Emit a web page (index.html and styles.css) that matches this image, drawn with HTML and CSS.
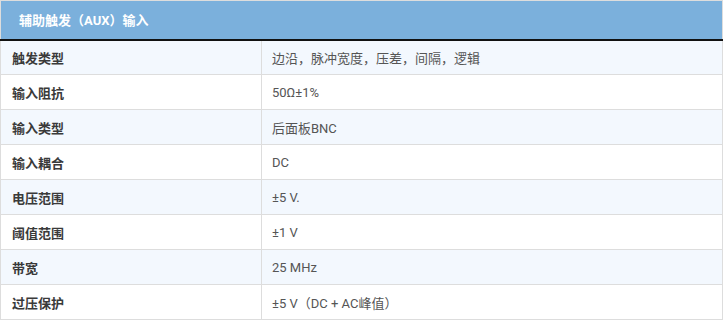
FILE: index.html
```html
<!DOCTYPE html>
<html lang="zh">
<head>
<meta charset="utf-8">
<link rel="stylesheet" href="styles.css">
</head>
<body>
<table class="spec">
  <colgroup><col class="c-label"><col class="c-val"></colgroup>
  <thead>
    <tr><th colspan="2" class="head">辅助触发（AUX）输入</th></tr>
  </thead>
  <tbody>
    <tr class="alt"><td class="label">触发类型</td><td class="val">边沿，脉冲宽度，压差，间隔，逻辑</td></tr>
    <tr><td class="label">输入阻抗</td><td class="val">50Ω±1%</td></tr>
    <tr class="alt"><td class="label">输入类型</td><td class="val">后面板BNC</td></tr>
    <tr><td class="label">输入耦合</td><td class="val">DC</td></tr>
    <tr class="alt"><td class="label">电压范围</td><td class="val">±5 V.</td></tr>
    <tr><td class="label">阈值范围</td><td class="val">±1 V</td></tr>
    <tr class="alt"><td class="label">带宽</td><td class="val">25 MHz</td></tr>
    <tr><td class="label">过压保护</td><td class="val">±5 V（DC + AC峰值）</td></tr>
  </tbody>
</table>
</body>
</html>
```
FILE: styles.css
```css
html, body {
  margin: 0;
  padding: 0;
  background: #fff;
}
.spec {
  width: 723px;
  border-collapse: collapse;
  font-family: Roboto, "Noto Sans CJK SC", sans-serif;
  font-size: 13px;
  table-layout: fixed;
}
.c-label { width: 261px; }
.head {
  background: #7bb0dc;
  color: #fff;
  font-weight: bold;
  text-align: left;
  height: 39px;
  padding: 0 0 0 18px;
  border: 1px solid #ddd;
  border-bottom: 2px solid #111;
  box-sizing: border-box;
}
.spec td {
  height: 35px;
  padding: 0 10px;
  border: 1px solid #ddd;
  box-sizing: border-box;
}
.spec .label {
  padding-left: 11px;
  color: #3a3a3a;
  font-weight: bold;
}
.spec .val {
  color: #555;
}
.alt td {
  background: #f3f8fe;
}
```
